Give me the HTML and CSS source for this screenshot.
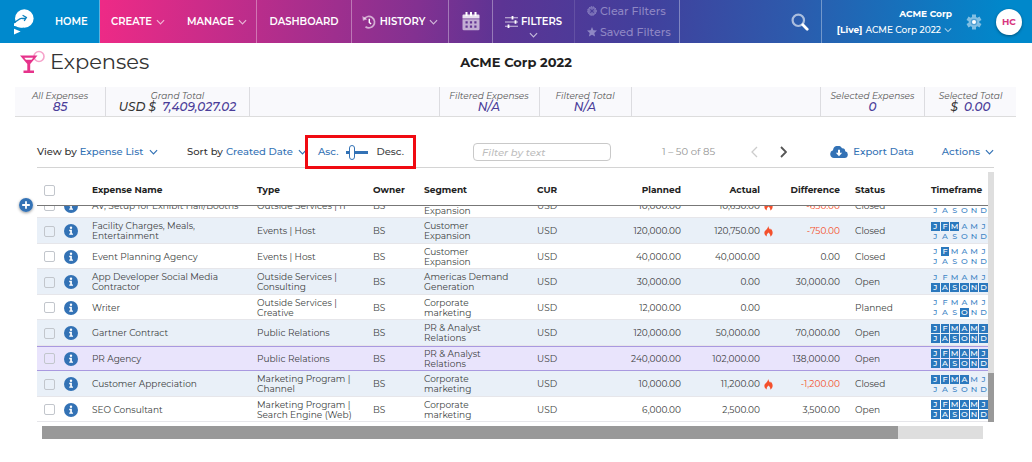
FILE: index.html
```html
<!DOCTYPE html>
<html lang="en">
<head>
<meta charset="utf-8">
<meta name="viewport" content="width=device-width, initial-scale=1">
<title>Expenses</title>
<link rel="stylesheet" href="styles.css">
</head>
<body>
<svg class="defs" width="0" height="0" aria-hidden="true">
  <symbol id="chevron" viewBox="0 0 10 6"><path d="M1 1l4 4 4-4" fill="none" stroke="currentColor" stroke-width="1.3"/></symbol>
  <symbol id="info" viewBox="0 0 14 14"><circle cx="7" cy="7" r="7" fill="#3372b5"/><circle cx="7" cy="3.7" r="1.2" fill="#fff"/><path d="M5.2 5.8h2.7v3.6h1.1v1.4H5.2V9.4h1V7.2h-1z" fill="#fff"/></symbol>
  <symbol id="flame" viewBox="0 0 10 12"><path d="M4.700 0C5.300 2.300 6 3.100 6.900 4c.3-.3.500-.8.500-1.200C8.700 4 9.600 5.700 9.600 7.400c0 2-1.100 3.500-2.700 4.200.5-1.700-.3-3-1.900-4.400-1.500 1.300-2.400 2.700-1.800 4.400C1.500 10.900.4 9.400.4 7.500.4 4.800 4.500 3.500 4.700 0z" fill="#f4502c"/></symbol>
</svg>

<header class="topbar">
  <a class="home" href="#">
    <svg class="logo" viewBox="0 0 20 26" aria-hidden="true"><circle cx="10.300" cy="9.500" r="9.300" fill="#fff"/><path d="M0 14.500V17c2.500 0 4 2 9 1.800L5 12z" fill="#fff"/><path d="M0 13c3 0 4.500-3.600 7.500-3.600 1.700 0 3 .6 4.700-.6M8.600 6.200l3.800 2.200-2.200 3.600" fill="none" stroke="#0a7fbd" stroke-width="1.300"/><path d="M0 19.800l6.600 2.600L0 25.600z" fill="#fff"/></svg>
    <span>HOME</span>
  </a>
  <nav class="menu" aria-label="Main">
    <div class="group create">
      <button type="button">CREATE <svg class="chev"><use href="#chevron"/></svg></button>
      <button type="button">MANAGE <svg class="chev"><use href="#chevron"/></svg></button>
    </div>
    <div class="group dash"><a href="#">DASHBOARD</a></div>
    <div class="group history">
      <button type="button"><svg class="clock" viewBox="0 0 14 14" aria-hidden="true"><path d="M2.200 3.800A5.700 5.700 0 1 1 3.500 11.700" fill="none" stroke="#fff" stroke-opacity=".6" stroke-width="1.700"/><path d="M.4 1l.5 4.800 4.400-1.500z" fill="#fff" fill-opacity=".6"/><path d="M7.300 3.800v3.600l1.800 1.700" fill="none" stroke="#fff" stroke-width="1.400"/></svg>HISTORY <svg class="chev"><use href="#chevron"/></svg></button>
    </div>
    <div class="group cal">
      <button type="button" aria-label="Calendar"><svg class="calendar" viewBox="0 0 18 19" aria-hidden="true"><path d="M1.500 2.500h15a1 1 0 0 1 1 1v3H.5v-3a1 1 0 0 1 1-1z" fill="#fff" fill-opacity=".85"/><path d="M3.500 0h2v4h-2zM8 0h2v4H8zM12.500 0h2v4h-2z" fill="#fff"/><path d="M.5 7.300h17V17a1.300 1.300 0 0 1-1.300 1.300H1.800A1.300 1.300 0 0 1 .5 17z" fill="#fff" fill-opacity=".6"/><path d="M3.500 9.300h2.200v2.200H3.500zm4.400 0h2.200v2.200H7.900zm4.400 0h2.200v2.200h-2.200zM3.500 13.500h2.200v2.200H3.500zm4.400 0h2.200v2.200H7.900zm4.400 0h2.200v2.200h-2.200z" fill="#633592"/></svg></button>
    </div>
    <div class="group filters">
      <button type="button"><span class="filter-title"><svg class="sliders" viewBox="0 0 13 12" aria-hidden="true"><path d="M0 1.800h13M0 6h13M0 10.200h13" stroke="#fff" stroke-opacity=".7" stroke-width="1.100"/><path d="M7.500 0v3.600M10.500 4.200v3.600M3.500 8.400V12" stroke="#fff" stroke-width="1.800"/></svg>FILTERS</span><svg class="chev"><use href="#chevron"/></svg></button>
    </div>
    <div class="group saved">
      <button type="button" disabled><svg class="fi" viewBox="0 0 10 10" aria-hidden="true"><circle cx="5" cy="5" r="4.300" fill="currentColor" fill-opacity=".65" stroke="currentColor" stroke-dasharray="1.500 .8"/><path d="M3.300 3.300l3.400 3.400m0-3.400L3.300 6.700" stroke="#493d98" stroke-width="1.200"/></svg>Clear Filters</button>
      <button type="button" disabled><svg class="fi" viewBox="0 0 10 10" aria-hidden="true"><path d="M5 0l1.400 3.300 3.600.3-2.700 2.400.8 3.600L5 7.700 1.900 9.600l.8-3.600L0 3.600l3.600-.3z" fill="currentColor"/></svg>Saved Filters</button>
    </div>
    <div class="group find">
      <button type="button" aria-label="Search"><svg class="search" viewBox="0 0 18 18" aria-hidden="true"><circle cx="7.300" cy="7.300" r="5.700" fill="none" stroke="#fff" stroke-opacity=".6" stroke-width="2.200"/><path d="M11.800 11.800l4.400 4.400" stroke="#fff" stroke-width="2.800" stroke-linecap="round"/></svg></button>
    </div>
    <div class="group account">
      <button type="button" class="org"><strong>ACME Corp</strong><span><strong>[Live]</strong> ACME Corp 2022 <svg class="chev"><use href="#chevron"/></svg></span></button>
      <button type="button" aria-label="Settings"><svg class="gear" viewBox="0 0 16 16" aria-hidden="true"><path d="M8 .5v15M1.500 4.250l13 7.500M1.500 11.750l13-7.500" stroke="#82bfe3" stroke-width="4"/><circle cx="8" cy="8" r="5.400" fill="#82bfe3"/><circle cx="8" cy="8" r="3.300" fill="#4f9fd3"/><circle cx="8" cy="8" r="2" fill="#fff"/></svg></button>
      <button type="button" class="avatar">HC</button>
    </div>
  </nav>
</header>

<main>
  <div class="titlebar">
    <div class="page-title">
      <svg class="drink" viewBox="0 0 25 24" aria-hidden="true"><circle cx="19" cy="6.500" r="5" fill="none" stroke="#f6a3cb" stroke-width="1.600"/><path d="M0 5.500h17.500L10.200 14v6.500H14V23H3.500v-2.500h3.800V14z" fill="#e6338b"/><path d="M4.300 7.700h8.900l-1.600 2H5.900z" fill="#fff"/></svg>
      <h1>Expenses</h1>
    </div>
    <h2>ACME Corp 2022</h2>
    <div></div>
  </div>

  <dl class="stats">
    <div class="stat all"><dt>All Expenses</dt><dd>85</dd></div>
    <div class="stat grand"><dt>Grand Total</dt><dd><span class="cur">USD $</span> 7,409,027.02</dd></div>
    <div class="stat blank"></div>
    <div class="stat fexp"><dt>Filtered Expenses</dt><dd>N/A</dd></div>
    <div class="stat ftot"><dt>Filtered Total</dt><dd>N/A</dd></div>
    <div class="stat blank"></div>
    <div class="stat sexp"><dt>Selected Expenses</dt><dd>0</dd></div>
    <div class="stat stot"><dt>Selected Total</dt><dd><span class="cur">$</span> 0.00</dd></div>
  </dl>

  <section class="panel">
    <div class="toolbar">
      <label class="pick view">View by <select><option>Expense List</option></select><svg class="chev"><use href="#chevron"/></svg></label>
      <label class="pick sort">Sort by <select><option>Created Date</option></select><svg class="chev"><use href="#chevron"/></svg></label>
      <label class="direction"><span class="asc">Asc.</span><input type="range" min="0" max="1" value="0" aria-label="Sort direction"><span>Desc.</span></label>
      <input class="textfilter" type="text" placeholder="Filter by text" aria-label="Filter by text">
      <div class="pager">
        <span>1 – 50 of 85</span>
        <button type="button" class="prev" disabled aria-label="Previous page"><svg viewBox="0 0 7 12"><path d="M6 1L1 6l5 5" fill="none" stroke="currentColor" stroke-width="1.300"/></svg></button>
        <button type="button" class="next" aria-label="Next page"><svg viewBox="0 0 7 12"><path d="M1 1l5 5-5 5" fill="none" stroke="currentColor" stroke-width="1.800"/></svg></button>
      </div>
      <button type="button" class="export"><svg viewBox="0 0 18 12" aria-hidden="true"><path d="M4 12a4 4 0 0 1-1-7.800A4.800 4.800 0 0 1 12 2.300a3 3 0 0 1 3.200 3A3.400 3.400 0 0 1 14.600 12z" fill="#3372b5"/><path d="M8 3.800h2v3h2.200L9 10.200 5.800 6.800H8z" fill="#fff"/></svg>Export Data</button>
      <button type="button" class="actions">Actions <svg class="chev"><use href="#chevron"/></svg></button>
    </div>

    <button type="button" class="add" aria-label="Add expense"><svg viewBox="0 0 14 14"><circle cx="7" cy="7" r="7" fill="#3372b5"/><path d="M7 3.200v7.600M3.200 7h7.600" stroke="#fff" stroke-width="1.800"/></svg></button>

    <div class="grid">
      <div class="tables">
        <table class="head">
          <colgroup><col class="c-check"><col class="c-info"><col><col class="c-type"><col class="c-owner"><col class="c-seg"><col class="c-cur"><col class="c-plan"><col class="c-act"><col class="c-flame"><col class="c-diff"><col class="c-status"><col class="c-time"></colgroup>
          <thead><tr><th class="check"><input type="checkbox" aria-label="Select all"></th><th></th><th>Expense Name</th><th>Type</th><th>Owner</th><th>Segment</th><th>CUR</th><th class="num">Planned</th><th class="num">Actual</th><th></th><th class="num">Difference</th><th class="status">Status</th><th>Timeframe</th></tr></thead>
        </table>
        <div class="viewport">
          <table class="body">
            <colgroup><col class="c-check"><col class="c-info"><col><col class="c-type"><col class="c-owner"><col class="c-seg"><col class="c-cur"><col class="c-plan"><col class="c-act"><col class="c-flame"><col class="c-diff"><col class="c-status"><col class="c-time"></colgroup>
            <tbody>
              <tr><td class="check"><input type="checkbox" aria-label="Select AV setup"></td><td class="info"><button type="button" aria-label="Details"><svg><use href="#info"/></svg></button></td><td>AV, Setup for Exhibit Hall/Booths</td><td>Outside Services | IT</td><td>BS</td><td>Customer<br>Expansion</td><td>USD</td><td class="num">10,000.00</td><td class="num">10,650.00</td><td class="flame"><svg><use href="#flame"/></svg></td><td class="num over">-650.00</td><td class="status">Closed</td><td><div class="months"><i>J</i><i>F</i><i>M</i><i>A</i><i>M</i><i>J</i><i>J</i><i>A</i><i>S</i><i>O</i><i>N</i><i>D</i></div></td></tr>
              <tr><td class="check"><input type="checkbox" aria-label="Select Facility Charges"></td><td class="info"><button type="button" aria-label="Details"><svg><use href="#info"/></svg></button></td><td>Facility Charges, Meals,<br>Entertainment</td><td>Events | Host</td><td>BS</td><td>Customer<br>Expansion</td><td>USD</td><td class="num">120,000.00</td><td class="num">120,750.00</td><td class="flame"><svg><use href="#flame"/></svg></td><td class="num over">-750.00</td><td class="status">Closed</td><td><div class="months"><b>J</b><b>F</b><b>M</b><i>A</i><i>M</i><i>J</i><i>J</i><i>A</i><i>S</i><i>O</i><i>N</i><i>D</i></div></td></tr>
              <tr><td class="check"><input type="checkbox" aria-label="Select Event Planning Agency"></td><td class="info"><button type="button" aria-label="Details"><svg><use href="#info"/></svg></button></td><td>Event Planning Agency</td><td>Events | Host</td><td>BS</td><td>Customer<br>Expansion</td><td>USD</td><td class="num">40,000.00</td><td class="num">40,000.00</td><td></td><td class="num">0.00</td><td class="status">Closed</td><td><div class="months"><i>J</i><b>F</b><i>M</i><i>A</i><i>M</i><i>J</i><i>J</i><i>A</i><i>S</i><i>O</i><i>N</i><i>D</i></div></td></tr>
              <tr><td class="check"><input type="checkbox" aria-label="Select App Developer"></td><td class="info"><button type="button" aria-label="Details"><svg><use href="#info"/></svg></button></td><td>App Developer Social Media<br>Contractor</td><td>Outside Services |<br>Consulting</td><td>BS</td><td>Americas Demand<br>Generation</td><td>USD</td><td class="num">30,000.00</td><td class="num">0.00</td><td></td><td class="num">30,000.00</td><td class="status">Open</td><td><div class="months"><i>J</i><i>F</i><i>M</i><i>A</i><i>M</i><i>J</i><b>J</b><b>A</b><b>S</b><b>O</b><b>N</b><b>D</b></div></td></tr>
              <tr><td class="check"><input type="checkbox" aria-label="Select Writer"></td><td class="info"><button type="button" aria-label="Details"><svg><use href="#info"/></svg></button></td><td>Writer</td><td>Outside Services |<br>Creative</td><td>BS</td><td>Corporate<br>marketing</td><td>USD</td><td class="num">12,000.00</td><td class="num">0.00</td><td></td><td class="num"></td><td class="status">Planned</td><td><div class="months"><i>J</i><i>F</i><i>M</i><i>A</i><i>M</i><i>J</i><i>J</i><i>A</i><i>S</i><b>O</b><i>N</i><i>D</i></div></td></tr>
              <tr><td class="check"><input type="checkbox" aria-label="Select Gartner Contract"></td><td class="info"><button type="button" aria-label="Details"><svg><use href="#info"/></svg></button></td><td>Gartner Contract</td><td>Public Relations</td><td>BS</td><td>PR &amp; Analyst<br>Relations</td><td>USD</td><td class="num">120,000.00</td><td class="num">50,000.00</td><td></td><td class="num">70,000.00</td><td class="status">Open</td><td><div class="months"><b>J</b><b>F</b><b>M</b><b>A</b><b>M</b><b>J</b><b>J</b><b>A</b><b>S</b><b>O</b><b>N</b><b>D</b></div></td></tr>
              <tr class="current"><td class="check"><input type="checkbox" aria-label="Select PR Agency"></td><td class="info"><button type="button" aria-label="Details"><svg><use href="#info"/></svg></button></td><td>PR Agency</td><td>Public Relations</td><td>BS</td><td>PR &amp; Analyst<br>Relations</td><td>USD</td><td class="num">240,000.00</td><td class="num">102,000.00</td><td></td><td class="num">138,000.00</td><td class="status">Open</td><td><div class="months"><b>J</b><b>F</b><b>M</b><b>A</b><b>M</b><b>J</b><b>J</b><b>A</b><b>S</b><b>O</b><b>N</b><b>D</b></div></td></tr>
              <tr><td class="check"><input type="checkbox" aria-label="Select Customer Appreciation"></td><td class="info"><button type="button" aria-label="Details"><svg><use href="#info"/></svg></button></td><td>Customer Appreciation</td><td>Marketing Program |<br>Channel</td><td>BS</td><td>Corporate<br>marketing</td><td>USD</td><td class="num">10,000.00</td><td class="num">11,200.00</td><td class="flame"><svg><use href="#flame"/></svg></td><td class="num over">-1,200.00</td><td class="status">Closed</td><td><div class="months"><b>J</b><b>F</b><b>M</b><b>A</b><i>M</i><i>J</i><i>J</i><i>A</i><i>S</i><i>O</i><i>N</i><i>D</i></div></td></tr>
              <tr><td class="check"><input type="checkbox" aria-label="Select SEO Consultant"></td><td class="info"><button type="button" aria-label="Details"><svg><use href="#info"/></svg></button></td><td>SEO Consultant</td><td>Marketing Program |<br>Search Engine (Web)</td><td>BS</td><td>Corporate<br>marketing</td><td>USD</td><td class="num">6,000.00</td><td class="num">2,500.00</td><td></td><td class="num">3,500.00</td><td class="status">Open</td><td><div class="months"><b>J</b><b>F</b><b>M</b><b>A</b><b>M</b><b>J</b><b>J</b><b>A</b><b>S</b><b>O</b><b>N</b><b>D</b></div></td></tr>
            </tbody>
          </table>
        </div>
      </div>
      <div class="vscroll"><div class="vthumb"></div></div>
    </div>
    <div class="hscroll"><div class="hthumb"></div></div>
  </section>
</main>
</body>
</html>
```

FILE: styles.css
```css
* { box-sizing: border-box; }
body {
  margin: 0;
  background: #fff;
  color: #3d3f42;
  font-family: Montserrat, Inter, "Open Sans", sans-serif;
  font-size: 9px;
  line-height: 10px;
}
button, select, input { font: inherit; color: inherit; margin: 0; }
button { padding: 0; border: 0; background: none; }
a { color: inherit; text-decoration: none; }
svg { display: block; flex: none; }
h1, h2, dl, dd { margin: 0; }
.defs { position: absolute; }
.chev { width: 9px; height: 6px; }

/* Top bar */
.topbar { display: flex; height: 43px; color: #fff; font-size: 10px; font-weight: 600; line-height: 14px; }
.home { display: flex; align-items: center; gap: 21px; width: 100px; padding-left: 14px; background: #0089cd; border-right: 1px solid #5cb2dd; }
.logo { width: 20px; height: 26px; }
.menu {
  display: flex;
  flex: 1;
  background: linear-gradient(96deg, #ee2a86 0%, #b92d8b 17%, #833191 34%, #5c3494 43%, #423f9c 58%, #2d5aac 74%, #0088cb 97%);
}
.group { display: flex; align-items: center; border-right: 1px solid rgba(255,255,255,.35); white-space: nowrap; }
.group button { display: flex; align-items: center; gap: 4px; }
.group .chev { opacity: .65; }
.create { width: 157px; padding-left: 11px; gap: 22px; }
.dash { width: 95px; justify-content: center; }
.history { width: 97px; justify-content: center; }
.clock { width: 14px; height: 14px; }
.cal { width: 44px; justify-content: center; }
.calendar { width: 18px; height: 19px; }
.filters { width: 82px; justify-content: center; border-right-color: rgba(255,255,255,.12); }
.filters button { flex-direction: column; gap: 3px; padding-top: 9px; }
.filter-title { display: flex; align-items: center; gap: 3px; }
.sliders { width: 13px; height: 12px; }
.saved { width: 105px; flex-direction: column; align-items: flex-start; justify-content: center; gap: 7px; padding-left: 12px; font-size: 11px; font-weight: 500; color: #8f87c4; }
.saved button { gap: 3px; }
.fi { width: 10px; height: 10px; }
.find { flex: 1; justify-content: flex-end; padding-right: 12px; }
.search { width: 18px; height: 18px; }
.account { width: 210px; justify-content: flex-end; gap: 14px; padding-right: 10px; border-right: 0; font-size: 9px; font-weight: 500; }
.account .org { flex-direction: column; align-items: flex-end; gap: 2px; }
.org span { display: flex; align-items: center; gap: 3px; }
.org strong { font-weight: 700; }
.org .chev { width: 8px; height: 6px; }
.gear { width: 16px; height: 16px; }
.account .avatar { justify-content: center; width: 26px; height: 26px; border-radius: 50%; background: #fff; color: #d8357f; font-weight: 700; box-shadow: 0 1px 3px rgba(0,0,0,.4); }

/* Title */
.titlebar { display: grid; grid-template-columns: 1fr auto 1fr; align-items: center; height: 38px; padding-left: 20px; margin: 0 20px 6px 0; }
.page-title { display: flex; align-items: center; gap: 5px; }
.drink { width: 25px; height: 24px; }
h1 { font-size: 21px; line-height: 26px; font-weight: 400; color: #333; }
h2 { font-size: 13px; line-height: 18px; font-weight: 700; color: #1f1f1f; }

/* Totals */
.stats { display: flex; height: 30px; margin: 0 16px 0 15px; background: #f9f9fc; border-bottom: 1px solid #ddd; }
.stat { border-right: 1px solid #dcdce0; padding-top: 4px; text-align: center; font-style: italic; white-space: nowrap; }
.stat:last-child { border-right: 0; }
.stat dt { font-size: 9px; line-height: 10px; color: #555; }
.stat dd { font-size: 12px; line-height: 11px; font-weight: 500; color: #4b3d99; }
.cur { color: #333; margin-right: 3px; }
.all { width: 91px; }
.grand { width: 144px; }
.blank { flex: 1; }
.fexp { width: 100px; }
.ftot { width: 92px; }
.sexp { width: 104px; }
.stot { width: 91px; }

/* Toolbar */
.panel { position: relative; margin: 0 38px 0 37px; }
.toolbar { display: flex; align-items: center; height: 51px; padding-top: 20px; border-bottom: 1px solid #d4d4d4; font-size: 10px; line-height: 14px; font-weight: 500; white-space: nowrap; }
.pick { display: flex; align-items: center; gap: 3px; color: #333; }
.pick .chev, .actions, .export { color: #3372b5; }
.pick .chev { margin-left: 2px; }
.pick select { appearance: none; padding: 0; border: 0; background: none; color: #3372b5; }
.view { width: 150px; }
.sort { width: 118px; }
.direction { position: relative; display: flex; align-items: center; gap: 8px; margin-right: 12px; width: 111px; padding-left: 13px; }
.direction::after { content: ""; position: absolute; inset: -9px 0; border: 3px solid #f00a12; pointer-events: none; }
.asc { color: #3372b5; }
.direction input { appearance: none; width: 22px; height: 16px; background: linear-gradient(#3372b5, #3372b5) center / 100% 3px no-repeat; }
.direction input::-webkit-slider-thumb { appearance: none; width: 6px; height: 15px; margin-left: 3px; border: 1px solid #3372b5; border-radius: 3px; background: #fff; }
.textfilter { width: 138px; height: 18px; margin-left: 45px; padding: 0 8px; border: 1px solid #c9c9c9; border-radius: 4px; }
.textfilter::placeholder { color: #bdbdbd; font-style: italic; opacity: 1; }
.pager { display: flex; align-items: center; flex: 1; margin-left: 51px; color: #949494; font-weight: 400; }
.pager span { width: 89px; }
.pager svg { width: 7px; height: 12px; }
.prev { color: #ccc; }
.next { margin-left: 22px; color: #555; }
.export { display: flex; align-items: center; gap: 5px; margin-right: 28px; }
.export svg { width: 18px; height: 12px; }
.actions { display: flex; align-items: center; gap: 5px; }

.add { position: absolute; left: -18px; top: 81px; width: 14px; height: 14px; border-radius: 50%; box-shadow: 0 1px 3px rgba(0,0,0,.4); }
.add svg, .info svg { width: 14px; height: 14px; }

/* Table */
.grid { display: flex; }
.tables { flex: 1; min-width: 0; }
table { width: 100%; table-layout: fixed; border-collapse: collapse; }
th, td { padding: 0; text-align: left; white-space: nowrap; }
.c-check { width: 27px; }
.c-info { width: 28px; }
.c-type { width: 116px; }
.c-owner { width: 51px; }
.c-seg { width: 113px; }
.c-cur { width: 64px; }
.c-plan { width: 80px; }
.c-act { width: 79px; }
.c-flame { width: 18px; }
.c-diff { width: 62px; }
.c-status { width: 91px; }
.c-time { width: 57px; }
.head { box-shadow: inset 0 -1px #777; }
.head tr { height: 38px; }
.head th { padding-top: 6px; color: #222; font-weight: 700; }
.viewport { display: flex; align-items: flex-end; height: 216px; overflow: hidden; }
.body tr { height: 25px; box-shadow: inset 0 -1px #e6e6ea; }
.body tr:nth-child(even) { height: 26px; background: #e9f0f8; }
.body tr.current { background: #e9e4fc; box-shadow: inset 0 1px #a999e0, inset 0 -1px #a999e0; }
.check { padding-left: 7px; }
.check input { display: block; appearance: none; width: 11px; height: 11px; border: 1px solid #c2c6cc; border-radius: 2px; background: transparent; }
.info button { display: block; }
.num { text-align: right; }
.status { padding-left: 15px; }
.over { color: #f4502c; }
.flame svg { width: 9px; height: 11px; margin-left: 4px; }
.months { display: grid; grid-template-columns: repeat(6, 1fr); gap: 1px; font-size: 8px; line-height: 9px; text-align: center; }
.months i { font-style: normal; font-weight: 500; color: #3f86c6; }
.months b { font-weight: 500; color: #fff; background: #2b78bd; }

/* Scroll bars */
.vscroll { display: flex; align-items: flex-end; width: 6px; margin-top: 4px; background: #dedede; }
.vthumb { width: 100%; height: 49px; background: #999; }
.hscroll { height: 13px; margin: 4px 11px 0 5px; background: #dedede; }
.hthumb { width: 91%; height: 100%; background: #999; }
```
